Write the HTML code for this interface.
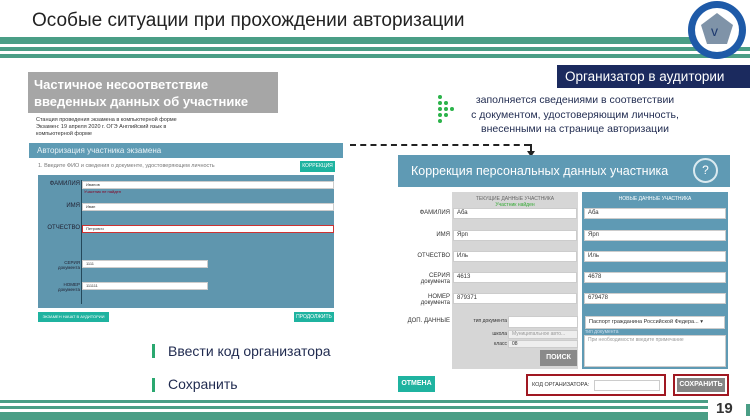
<!DOCTYPE html>
<html><head><meta charset="utf-8"><style>
*{margin:0;padding:0;box-sizing:border-box}
body{width:750px;height:420px;overflow:hidden;background:#fff;font-family:"Liberation Sans",sans-serif;position:relative}
.a{position:absolute}
.st{background:#4a9e86}
.t{font-size:7px;color:#333}
.in{position:absolute;background:#fff;border:1px solid #ccc;font-size:6px;color:#333;padding-left:3px;line-height:9px;height:11px}
.lbl{position:absolute;font-size:6px;color:#333;text-align:right}
</style></head><body>
<div class="a" style="left:32px;top:10px;font-size:19px;color:#222">Особые ситуации при прохождении авторизации</div>
<div class="a st" style="left:0;top:37px;width:700px;height:7px"></div>
<div class="a st" style="left:0;top:47px;width:750px;height:4px"></div>
<div class="a st" style="left:0;top:54px;width:750px;height:4px"></div>
<svg class="a" style="left:686px;top:0" width="62" height="62"><circle cx="31" cy="30" r="29" fill="#1e5aa8"/><circle cx="31" cy="30" r="22" fill="#fff"/><polygon points="31,13 47,25 41,44 21,44 15,25" fill="#7f93a8"/><text x="25" y="36" font-size="14" fill="#1e3a70" font-family="Liberation Sans">v</text></svg>
<div class="a" style="left:28px;top:72px;width:250px;height:41px;background:#a6a6a6;color:#fff;font-size:13px;font-weight:bold;padding:4px 0 0 6px;line-height:17px">Частичное несоответствие<br>введенных данных об участнике</div>
<div class="a" style="left:557px;top:65px;width:193px;height:23px;background:#1b2a5e;color:#fff;font-size:13.5px;line-height:23px;padding-left:8px">Организатор в аудитории</div>
<svg class="a" style="left:434px;top:94px" width="20" height="32" fill="#2bb34a"><circle cx="6" cy="3" r="2"/><circle cx="6" cy="9" r="2"/><circle cx="12" cy="9" r="2"/><circle cx="6" cy="15" r="2"/><circle cx="12" cy="15" r="2"/><circle cx="18" cy="15" r="2"/><circle cx="6" cy="21" r="2"/><circle cx="12" cy="21" r="2"/><circle cx="6" cy="27" r="2"/></svg>
<div class="a" style="left:460px;top:93px;width:230px;text-align:center;font-size:10.5px;color:#1f2a4f;line-height:14.5px">заполняется сведениями в соответствии<br>с документом, удостоверяющим личность,<br>внесенными на странице авторизации</div>
<div class="a t" style="left:36px;top:117px;font-size:5.5px;line-height:7px">Станция проведения экзамена в компьютерной форме<br>Экзамен: 19 апреля 2020 г. ОГЭ Английский язык в<br>компьютерной форме</div>
<div class="a" style="left:29px;top:143px;width:314px;height:15px;background:#5e9bb4;color:#e8f2f6;font-size:8px;padding:3px 0 0 8px">Авторизация участника экзамена</div>
<div class="a t" style="left:38px;top:163px;font-size:5.5px;color:#777">1. Введите ФИО и сведения о документе, удостоверяющем личность</div>
<div class="a" style="left:300px;top:161px;width:35px;height:11px;background:#1fb3a0;color:#fff;font-size:5px;text-align:center;line-height:11px">КОРРЕКЦИЯ</div>
<div class="a" style="left:38px;top:175px;width:296px;height:133px;background:#5f96ae"></div>
<div class="a" style="left:81px;top:180px;width:1px;height:124px;background:#24485a"></div>
<div class="lbl" style="left:40px;top:181px;width:40px;color:#223">ФАМИЛИЯ</div><div class="in" style="left:82px;top:181px;width:252px;height:8px;line-height:6px;font-size:4px">Иванов</div>
<div class="a" style="left:84px;top:189px;font-size:4px;color:#802">Участник не найден</div>
<div class="lbl" style="left:40px;top:203px;width:40px;color:#223">ИМЯ</div><div class="in" style="left:82px;top:203px;width:252px;height:8px;line-height:6px;font-size:4px">Иван</div>
<div class="lbl" style="left:40px;top:225px;width:40px;color:#223">ОТЧЕСТВО</div><div class="in" style="left:82px;top:225px;width:252px;height:8px;border:1px solid #c33;line-height:6px;font-size:4px">Петрович</div>
<div class="in" style="left:82px;top:260px;width:126px;height:8px;font-size:4px;line-height:6px">1111</div>
<div class="in" style="left:82px;top:282px;width:126px;height:8px;font-size:4px;line-height:6px">111111</div>
<div class="lbl" style="left:40px;top:260px;width:40px;font-size:4.5px;color:#223">СЕРИЯ<br>документа</div>
<div class="lbl" style="left:40px;top:282px;width:40px;font-size:4.5px;color:#223">НОМЕР<br>документа</div>
<div class="a" style="left:38px;top:312px;width:71px;height:10px;background:#1fb3a0;color:#fff;font-size:4px;line-height:10px;text-align:center">ЭКЗАМЕН НАЧАТ В АУДИТОРИИ</div>
<div class="a" style="left:294px;top:312px;width:40px;height:10px;background:#1fb3a0;color:#fff;font-size:5px;line-height:10px;text-align:center">ПРОДОЛЖИТЬ</div>
<div class="a" style="left:350px;top:144px;width:180px;border-top:2px dashed #222"></div>
<div class="a" style="left:530px;top:144px;width:2px;height:8px;background:#222"></div>
<div class="a" style="left:527px;top:151px;border-left:4px solid transparent;border-right:4px solid transparent;border-top:6px solid #222"></div>
<div class="a" style="left:398px;top:155px;width:332px;height:32px;background:#5f9ab4;color:#fff;font-size:12.5px;line-height:32px;padding-left:13px">Коррекция персональных данных участника</div>
<div class="a" style="left:693px;top:158px;width:25px;height:25px;border:2px solid #dbeaf0;border-radius:50%;color:#fff;font-size:12px;text-align:center;line-height:21px">?</div>
<div class="a" style="left:452px;top:192px;width:126px;height:177px;background:#d6d6d6"></div>
<div class="a" style="left:582px;top:192px;width:146px;height:177px;background:#5f9ab4"></div>
<div class="a" style="left:452px;top:196px;width:126px;text-align:center;font-size:5px;color:#666">ТЕКУЩИЕ ДАННЫЕ УЧАСТНИКА<br><span style="color:#3a3">Участник найден</span></div>
<div class="a" style="left:582px;top:196px;width:146px;text-align:center;font-size:5px;color:#fff">НОВЫЕ ДАННЫЕ УЧАСТНИКА</div>
<div class="lbl" style="left:398px;top:210px;width:52px">ФАМИЛИЯ</div><div class="in" style="left:453px;top:208px;width:124px">Аба</div><div class="in" style="left:584px;top:208px;width:142px">Аба</div>
<div class="lbl" style="left:398px;top:232px;width:52px">ИМЯ</div><div class="in" style="left:453px;top:230px;width:124px">Ярп</div><div class="in" style="left:584px;top:230px;width:142px">Ярп</div>
<div class="lbl" style="left:398px;top:253px;width:52px">ОТЧЕСТВО</div><div class="in" style="left:453px;top:251px;width:124px">Иль</div><div class="in" style="left:584px;top:251px;width:142px">Иль</div>
<div class="lbl" style="left:398px;top:273px;width:52px">СЕРИЯ<br>документа</div><div class="in" style="left:453px;top:272px;width:124px">4613</div><div class="in" style="left:584px;top:272px;width:142px">4678</div>
<div class="lbl" style="left:398px;top:294px;width:52px">НОМЕР<br>документа</div><div class="in" style="left:453px;top:293px;width:124px">879371</div><div class="in" style="left:584px;top:293px;width:142px">679478</div>
<div class="lbl" style="left:398px;top:318px;width:52px">ДОП. ДАННЫЕ</div>
<div class="lbl" style="left:455px;top:318px;width:52px;font-size:5px">тип документа</div><div class="in" style="left:508px;top:316px;width:70px;height:12px"></div>
<div class="lbl" style="left:455px;top:331px;width:52px;font-size:5px">школа</div><div class="in" style="left:508px;top:330px;width:70px;height:9px;line-height:7px;font-size:5px;color:#999;background:#eee">Муниципальное авто...</div>
<div class="lbl" style="left:455px;top:341px;width:52px;font-size:5px">класс</div><div class="in" style="left:508px;top:340px;width:70px;height:8px;line-height:6px;font-size:5px;background:#eee">08</div>
<div class="a" style="left:540px;top:350px;width:37px;height:16px;background:#8a8a8a;color:#fff;font-size:7px;font-weight:bold;text-align:center;line-height:16px">ПОИСК</div>
<div class="in" style="left:585px;top:316px;width:140px;height:13px;font-size:5.5px;line-height:11px">Паспорт гражданина Российской Федера... ▾</div>
<div class="a" style="left:585px;top:329px;font-size:5px;color:#cde">тип документа</div>
<div class="in" style="left:584px;top:335px;width:142px;height:32px;font-size:5px;color:#999;line-height:8px">При необходимости введите примечание</div>
<div class="a" style="left:398px;top:376px;width:37px;height:16px;background:#1fb3a0;color:#fff;font-size:7px;font-weight:bold;text-align:center;line-height:16px">ОТМЕНА</div>
<div class="a" style="left:526px;top:374px;width:140px;height:22px;border:2px solid #a01822;font-size:5.5px;color:#333;padding:6px 0 0 4px">КОД ОРГАНИЗАТОРА:<div class="a" style="left:66px;top:4px;width:66px;height:11px;border:1px solid #ccc;background:#fff"></div></div>
<div class="a" style="left:673px;top:374px;width:56px;height:22px;border:2px solid #a01822;background:#fff;padding:2px"><div style="background:#858585;color:#fff;font-size:7px;font-weight:bold;text-align:center;line-height:14px;height:14px">СОХРАНИТЬ</div></div>
<div class="a" style="left:152px;top:344px;width:3px;height:14px;background:#2aa870"></div>
<div class="a" style="left:168px;top:343px;font-size:14px;color:#1f2a4f">Ввести код организатора</div>
<div class="a" style="left:152px;top:378px;width:3px;height:14px;background:#2aa870"></div>
<div class="a" style="left:168px;top:376px;font-size:14px;color:#1f2a4f">Сохранить</div>
<div class="a st" style="left:0;top:400px;width:708px;height:3px"></div>
<div class="a st" style="left:0;top:406px;width:708px;height:3px"></div>
<div class="a st" style="left:0;top:412px;width:708px;height:8px"></div>
<div class="a" style="left:716px;top:400px;font-size:15px;font-weight:bold;color:#333">19</div>
<div class="a st" style="left:746px;top:404px;width:4px;height:12px"></div>
</body></html>
